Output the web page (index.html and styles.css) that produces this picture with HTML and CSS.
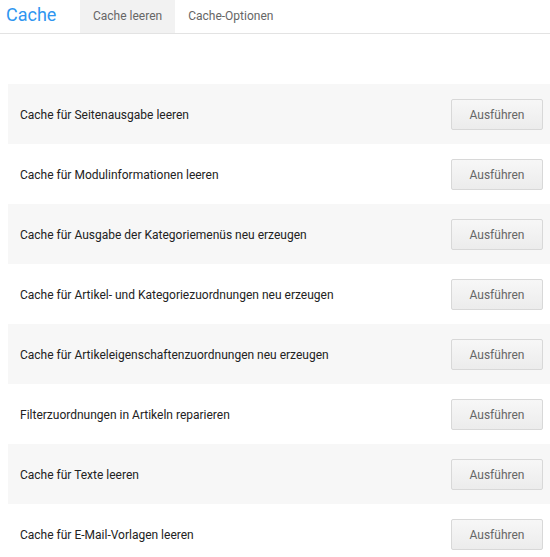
FILE: index.html
```html
<!DOCTYPE html>
<html lang="de">
<head>
<meta charset="utf-8">
<link rel="stylesheet" href="styles.css">
</head>
<body>
<header class="header">
  <h1 class="title">Cache</h1>
  <nav class="tabs">
    <a class="tab tab-active">Cache leeren</a>
    <a class="tab">Cache-Optionen</a>
  </nav>
</header>
<main class="list">
  <div class="row"><span class="label">Cache für Seitenausgabe leeren</span><button class="btn">Ausführen</button></div>
  <div class="row"><span class="label">Cache für Modulinformationen leeren</span><button class="btn">Ausführen</button></div>
  <div class="row"><span class="label">Cache für Ausgabe der Kategoriemenüs neu erzeugen</span><button class="btn">Ausführen</button></div>
  <div class="row"><span class="label">Cache für Artikel- und Kategoriezuordnungen neu erzeugen</span><button class="btn">Ausführen</button></div>
  <div class="row"><span class="label">Cache für Artikeleigenschaftenzuordnungen neu erzeugen</span><button class="btn">Ausführen</button></div>
  <div class="row"><span class="label">Filterzuordnungen in Artikeln reparieren</span><button class="btn">Ausführen</button></div>
  <div class="row"><span class="label">Cache für Texte leeren</span><button class="btn">Ausführen</button></div>
  <div class="row"><span class="label">Cache für E-Mail-Vorlagen leeren</span><button class="btn">Ausführen</button></div>
</main>
</body>
</html>
```
FILE: styles.css
```css
html, body {
  margin: 0;
  padding: 0;
  background: #fff;
  font-family: Roboto, "Liberation Sans", Arial, sans-serif;
}
.header {
  display: flex;
  align-items: stretch;
  height: 33px;
  border-bottom: 1px solid #e3e3e3;
}
.title {
  margin: 0;
  padding: 0 0 0 6px;
  width: 74px;
  font-size: 18px;
  font-weight: 400;
  line-height: 30px;
  color: #2f96f0;
}
.tabs {
  display: flex;
}
.tab {
  display: flex;
  align-items: center;
  padding: 0 13px 2px 13px;
  font-size: 12px;
  color: #666;
  cursor: pointer;
}
.tab-active {
  background: #f2f2f2;
}
.list {
  margin: 50px 0 0 8px;
}
.row {
  display: flex;
  align-items: center;
  justify-content: space-between;
  height: 60px;
  padding: 1px 7px 0 12px;
  box-sizing: border-box;
}
.row:nth-child(odd) {
  background: #f7f7f7;
}
.label {
  font-size: 12px;
  color: #222;
}
.btn {
  width: 92px;
  height: 31px;
  margin-top: -1px;
  padding: 2px 0 0 0;
  border: 1px solid #d8d8d8;
  border-radius: 2px;
  background: linear-gradient(#f7f7f7, #ececec);
  color: #666;
  font-family: inherit;
  font-size: 12px;
}
```
